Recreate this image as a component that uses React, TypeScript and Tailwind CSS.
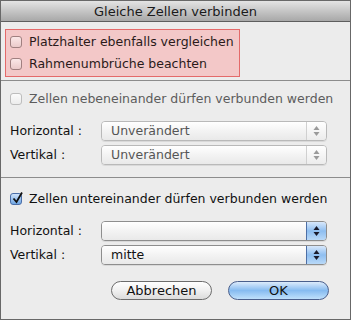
import React from "react";

const font = { fontFamily: '"DejaVu Sans", "Liberation Sans", sans-serif' };

const Check = ({ checked, disabled, tint }: { checked?: boolean; disabled?: boolean; tint?: boolean }) => (
  <span
    className={`relative inline-block w-[12px] h-[12px] rounded-[3px] border shrink-0 ${
      checked
        ? "border-[#4a6ea8] bg-gradient-to-b from-[#cfe3fa] to-[#6fa6e3]"
        : disabled
        ? "border-[#bdbdbd] bg-gradient-to-b from-[#fbfbfb] to-[#ececec]"
        : tint
        ? "border-[#a08080] bg-gradient-to-b from-[#fbe8e8] to-[#ebcaca]"
        : "border-[#9a9a9a] bg-gradient-to-b from-white to-[#e2e2e2]"
    }`}
  >
    {checked && (
      <svg className="absolute left-[1px] top-[-3px]" width="12" height="13" viewBox="0 0 12 13">
        <path d="M1.5 7.5 L4.5 11 L10 1.5" fill="none" stroke="#111" strokeWidth="1.8" />
      </svg>
    )}
  </span>
);

const Arrows = ({ color }: { color: string }) => (
  <svg width="7" height="12" viewBox="0 0 7 12">
    <path d="M3.5 1 L6.5 5 L0.5 5 Z" fill={color} />
    <path d="M3.5 11 L6.5 7 L0.5 7 Z" fill={color} />
  </svg>
);

const Select = ({ value, disabled }: { value?: string; disabled?: boolean }) => (
  <div
    className={`flex h-[20px] w-[226px] rounded-[4px] border overflow-hidden shadow-[0_1px_0_rgba(0,0,0,0.08)] ${
      disabled ? "border-[#b9b9b9]" : "border-[#8e8e8e]"
    }`}
  >
    <div className="flex-1 flex items-center pl-[9px] bg-gradient-to-b from-white via-[#f3f3f3] to-[#e9e9e9]">
      <span className={`text-[12.5px] leading-none ${disabled ? "text-[#555]" : "text-[#111]"}`}>{value}</span>
    </div>
    {disabled ? (
      <div className="w-[20px] flex items-center justify-center border-l border-[#d0d0d0] bg-gradient-to-b from-white to-[#ececec]">
        <Arrows color="#9a9a9a" />
      </div>
    ) : (
      <div className="w-[20px] flex items-center justify-center border-l border-[#4d6fa6] bg-gradient-to-b from-[#d8e8fb] via-[#8ebef0] to-[#b9d9f8]">
        <Arrows color="#1a1a2a" />
      </div>
    )}
  </div>
);

const Row = ({ label, value, disabled, className }: { label: string; value?: string; disabled?: boolean; className?: string }) => (
  <div className={`flex items-center h-[20px] ${className ?? ""}`}>
    <span className="w-[100px] pl-[9px] text-[12.5px] text-[#111]">{label}</span>
    <Select value={value} disabled={disabled} />
  </div>
);

export default function App() {
  return (
    <div className="w-[352px] h-[321px] bg-white" style={font}>
      <div className="w-[351px] h-[320px] border border-[#686868] bg-[#ececec] flex flex-col">
        <div className="h-[21px] shrink-0 flex items-center justify-center border-b border-[#5e5e5e] bg-gradient-to-b from-[#e4e4e4] to-[#a8a8a8]">
          <span className="text-[13px] text-[#1a1a1a] leading-none">Gleiche Zellen verbinden</span>
        </div>

        <div className="ml-[4px] mt-[7px] w-[235px] h-[48px] border border-[#e46a6a] bg-[#f3c8c8] flex flex-col justify-center gap-[9px] pl-[4px]">
          <label className="flex items-center gap-[7px]">
            <Check tint />
            <span className="text-[12.5px] text-[#2a1a1a] leading-none">Platzhalter ebenfalls vergleichen</span>
          </label>
          <label className="flex items-center gap-[7px]">
            <Check tint />
            <span className="text-[12.5px] text-[#2a1a1a] leading-none">Rahmenumbrüche beachten</span>
          </label>
        </div>

        <div className="mt-[3px] h-px bg-[#8c8c8c]" />

        <label className="flex items-center gap-[7px] pl-[9px] mt-[11px] h-[14px]">
          <Check disabled />
          <span className="text-[12.5px] text-[#5c5c5c] leading-none">Zellen nebeneinander dürfen verbunden werden</span>
        </label>
        <Row className="mt-[15px]" label="Horizontal :" value="Unverändert" disabled />
        <Row className="mt-[4px]" label="Vertikal :" value="Unverändert" disabled />

        <div className="mt-[12px] h-px bg-[#8c8c8c]" />

        <label className="flex items-center gap-[7px] pl-[9px] mt-[14px] h-[14px]">
          <Check checked />
          <span className="text-[12.5px] text-[#111] leading-none">Zellen untereinander dürfen verbunden werden</span>
        </label>
        <Row className="mt-[15px]" label="Horizontal :" />
        <Row className="mt-[4px]" label="Vertikal :" value="mitte" />

        <div className="flex gap-[16px] pl-[110px] mt-[16px]">
          <button className="w-[101px] h-[19px] rounded-full border border-[#6c6c6c] bg-gradient-to-b from-white via-[#f0f0f0] to-[#dcdcdc] text-[13px] text-[#111] leading-none">
            Abbrechen
          </button>
          <button className="w-[101px] h-[19px] rounded-full border border-[#4a5f8c] bg-gradient-to-b from-[#dcebfb] via-[#86bbf0] to-[#bfe0fb] text-[13px] text-[#111] leading-none">
            OK
          </button>
        </div>
      </div>
    </div>
  );
}
